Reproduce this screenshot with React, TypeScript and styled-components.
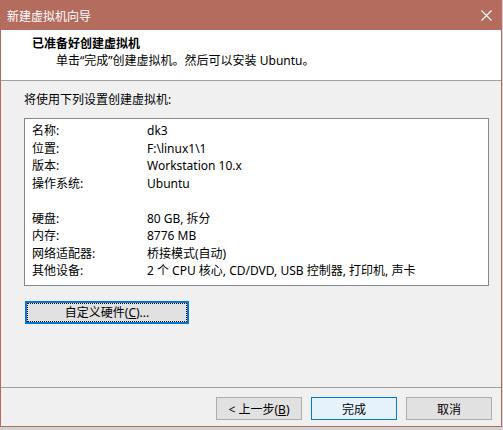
import React from "react";
import styled, { createGlobalStyle } from "styled-components";

const GlobalStyle = createGlobalStyle`
  html, body {
    margin: 0;
    padding: 0;
    background: #cfd3d6;
  }
  body {
    font-family: "Noto Sans", "Noto Sans CJK SC", sans-serif;
    font-size: 12px;
    color: #000;
  }
`;

const Window = styled.div`
  width: 500px;
  height: 426px;
  border: 1px solid #b36b5d;
  border-top: none;
  background: #f0f0f0;
  display: flex;
  flex-direction: column;
`;

const TitleBar = styled.div`
  height: 30px;
  background: #b46c5e;
  color: #fff;
  display: flex;
  align-items: center;
  justify-content: space-between;
  padding: 0 0 0 6px;
  font-size: 12px;
  font-family: "Noto Sans CJK SC", sans-serif;
  flex-shrink: 0;
`;

const CloseButton = styled.div`
  width: 30px;
  height: 30px;
  display: flex;
  align-items: center;
  justify-content: center;
`;

const Header = styled.div`
  height: 51px;
  background: #fff;
  border-bottom: 1px solid #a0a0a0;
  padding: 4px 0 0 31px;
  box-sizing: border-box;
  flex-shrink: 0;
`;

const HeaderTitle = styled.div`
  font-weight: bold;
  font-family: "Noto Sans CJK SC", sans-serif;
  line-height: 17px;
`;

const HeaderSub = styled.div`
  margin-left: 24px;
  line-height: 18px;
  margin-top: 1px;
`;

const Body = styled.div`
  flex: 1;
  padding: 10px 12px 0 23px;
`;

const Intro = styled.div`
  line-height: 17px;
  margin-bottom: 10px;
`;

const SummaryBox = styled.div`
  background: #fff;
  border: 1px solid #828790;
  padding: 3px 0 5px 7px;
`;

const Row = styled.div`
  display: grid;
  grid-template-columns: 115px 1fr;
  height: 17.5px;
  line-height: 17.5px;
  white-space: nowrap;
`;

const Customize = styled.button`
  margin-top: 15px;
  width: 164px;
  height: 23px;
  border: 2px solid #0078d7;
  background: #e1e1e1;
  outline: 1px dotted #000;
  outline-offset: -3px;
  font: inherit;
  padding: 0;
  color: #000;
  display: block;
  margin-left: 1px;
`;

const Footer = styled.div`
  border-top: 1px solid #a0a0a0;
  height: 39px;
  display: flex;
  justify-content: flex-end;
  align-items: flex-start;
  gap: 9px;
  padding: 9px 9px 0 0;
  box-sizing: border-box;
  flex-shrink: 0;
`;

const DialogButton = styled.button<{ $primary?: boolean }>`
  width: 86px;
  height: 23px;
  font: inherit;
  color: #000;
  padding: 0;
  background: ${(p) => (p.$primary ? "#e5f1fb" : "#e1e1e1")};
  border: 1px solid ${(p) => (p.$primary ? "#0078d7" : "#adadad")};
`;

const rows: [string, string][] = [
  ["名称:", "dk3"],
  ["位置:", "F:\\linux1\\1"],
  ["版本:", "Workstation 10.x"],
  ["操作系统:", "Ubuntu"],
  ["", ""],
  ["硬盘:", "80 GB, 拆分"],
  ["内存:", "8776 MB"],
  ["网络适配器:", "桥接模式(自动)"],
  ["其他设备:", "2 个 CPU 核心, CD/DVD, USB 控制器, 打印机, 声卡"],
];

export default function App() {
  return (
    <>
      <GlobalStyle />
      <Window>
        <TitleBar>
          <span>新建虚拟机向导</span>
          <CloseButton>
            <svg width="11" height="11" viewBox="0 0 11 11">
              <path d="M0.5 0.5 L10.5 10.5 M10.5 0.5 L0.5 10.5" stroke="#fff" strokeWidth="1.1" />
            </svg>
          </CloseButton>
        </TitleBar>
        <Header>
          <HeaderTitle>已准备好创建虚拟机</HeaderTitle>
          <HeaderSub>单击“完成”创建虚拟机。然后可以安装 Ubuntu。</HeaderSub>
        </Header>
        <Body>
          <Intro>将使用下列设置创建虚拟机:</Intro>
          <SummaryBox>
            {rows.map(([k, v], i) => (
              <Row key={i}>
                <span>{k}</span>
                <span>{v}</span>
              </Row>
            ))}
          </SummaryBox>
          <Customize>
            自定义硬件(<u>C</u>)...
          </Customize>
        </Body>
        <Footer>
          <DialogButton>
            &lt; 上一步(<u>B</u>)
          </DialogButton>
          <DialogButton $primary>完成</DialogButton>
          <DialogButton>取消</DialogButton>
        </Footer>
      </Window>
    </>
  );
}
